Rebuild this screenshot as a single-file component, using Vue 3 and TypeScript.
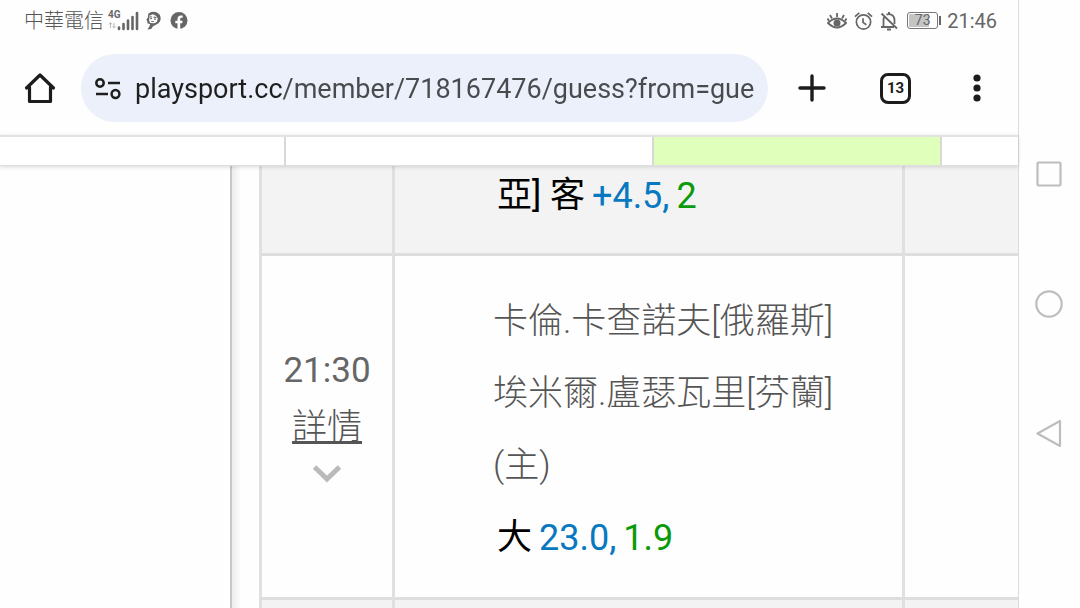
<script setup lang="ts">
import { ref } from 'vue'

interface Pick {
  side: string
  line: string
  odds: string
}

interface GuessRow {
  id: number
  time: string
  teams: string[]
  pick: Pick
}

const carrier = '中華電信'
const clock = '21:46'
const battery = 73
const tabCount = 13
const address = ref('playsport.cc/member/718167476/guess?from=gue')

const rows: GuessRow[] = [
  { id: 1, time: '', teams: [], pick: { side: '亞] 客', line: '+4.5', odds: '2' } },
  {
    id: 2,
    time: '21:30',
    teams: ['卡倫.卡查諾夫[俄羅斯]', '埃米爾.盧瑟瓦里[芬蘭]', '(主)'],
    pick: { side: '大', line: '23.0', odds: '1.9' },
  },
]
</script>

<template>
  <div class="device">
    <div class="screen">
      <header class="status">
        <div class="status-group">
          <span class="carrier">{{ carrier }}</span>
          <svg class="signal" viewBox="0 0 31 22" aria-label="4G">
            <text x="0" y="8" class="net">4G</text>
            <path d="M2.500 18v-5M1 14.500l1.500-2 1.500 2M6 13v5M4.600 16l1.400 2 1.500-2" fill="none" stroke="#bbb" stroke-width="1" />
            <path d="M11 19v-1.500M15.500 19v-5M20 19v-8.500M24.500 19V7M29 19V3" stroke="#666" stroke-width="2.600" fill="none" stroke-linecap="round" />
          </svg>
          <svg class="badge" viewBox="0 0 18 20" aria-hidden="true">
            <path d="M3 3C6 0 12 0 15 4c2 4 1 8-3 10l-4 2-2 3-4 .5 2-3 1-2.500-3-1L2 11 1 9l1.500-2z" fill="#666" />
            <path d="M4 5l4-1.500 3 1.500 2 3-1 3.500-3 1.500-4-.500-1-2z" fill="#fff" />
            <path d="M4 6.500l3-.500M8.500 6.500l3 .500M5 8h2M9 8.500h2M6 11h3" stroke="#777" stroke-width="1.200" />
          </svg>
          <svg class="badge" viewBox="0 0 18 18" aria-hidden="true">
            <circle cx="9" cy="9" r="8.500" fill="#666" />
            <path d="M7.500 17.400v-5.700H5.300V9.200h2.200V7.400c0-2.300 1.300-3.500 3.300-3.500l1.900.200v2.100h-1.100c-1.100 0-1.400.600-1.400 1.300v1.700h2.400l-.400 2.500h-2v5.700z" fill="#fff" />
          </svg>
        </div>
        <div class="status-group">
          <svg class="eye" viewBox="0 0 20 18" aria-hidden="true">
            <path d="M1 11q9-9 18 0-9 9-18 0z" fill="none" stroke="#666" stroke-width="1.800" />
            <circle cx="10" cy="11" r="3.500" fill="#666" />
            <path d="M10 5V1M5 6.500L3 3M15 6.500l2-3.500M2 9L.500 6.500M18 9l1.500-2.500" stroke="#666" stroke-width="1.800" />
          </svg>
          <svg class="alarm" viewBox="0 0 20 20" aria-hidden="true">
            <circle cx="10" cy="11" r="7.500" fill="none" stroke="#666" stroke-width="1.800" />
            <path d="M9.500 7v4.500l3.500 2.500M1 5.500L5.500 1.500M19 5.500l-4.500-4" fill="none" stroke="#666" stroke-width="1.800" />
          </svg>
          <svg class="bell" viewBox="0 0 18 20" aria-hidden="true">
            <path d="M3.500 15.500V9q0-2 1-3.500M6.500 3.800Q9 2.500 11.500 3.800 14.500 5.500 14.500 9v4M1 16h13M1.500 2.500l15.500 15" fill="none" stroke="#666" stroke-width="1.800" />
            <path d="M7 18.500h4M9 1v2" stroke="#666" stroke-width="2" />
          </svg>
          <span class="battery"><span class="level">{{ battery }}</span></span>
          <span class="clock">{{ clock }}</span>
        </div>
      </header>

      <form class="toolbar" @submit.prevent>
        <button type="button" class="icon-btn" aria-label="首頁">
          <svg width="32" height="32" viewBox="0 0 32 32">
            <path d="M2.500 16L16 3l13.500 13M5.500 15v14.500h21V15" fill="none" stroke="#1c1c1c" stroke-width="3.200" stroke-linejoin="round" stroke-linecap="round" />
          </svg>
        </button>
        <div class="omnibox">
          <button type="button" class="icon-btn" aria-label="網站資訊">
            <svg width="26" height="22" viewBox="0 0 26 22">
              <g fill="none" stroke="#1f1f1f" stroke-width="2.500">
                <circle cx="5" cy="5" r="3.700" /><path d="M13 5h12M1 16h12" /><circle cx="20.500" cy="16" r="3.900" />
              </g>
            </svg>
          </button>
          <input v-model="address" class="address" type="text" aria-label="網址" />
        </div>
        <div class="actions">
          <button type="button" class="icon-btn" aria-label="新分頁">
            <svg width="28" height="28" viewBox="0 0 28 28"><path d="M14 2v24M2 14h24" stroke="#1c1c1c" stroke-width="3.400" stroke-linecap="round" /></svg>
          </button>
          <button type="button" class="icon-btn tabs" aria-label="分頁">{{ tabCount }}</button>
          <button type="button" class="icon-btn menu" aria-label="選單">
            <svg width="8" height="28" viewBox="0 0 8 28"><g fill="#1c1c1c"><circle cx="4" cy="4" r="3.600" /><circle cx="4" cy="14" r="3.600" /><circle cx="4" cy="24" r="3.600" /></g></svg>
          </button>
        </div>
      </form>

      <div class="strip">
        <div></div>
        <div></div>
        <div class="active"></div>
        <div></div>
      </div>

      <main class="page">
        <aside class="gutter"></aside>
        <div class="board">
          <table class="guesses">
            <colgroup>
              <col class="col-time" />
              <col class="col-match" />
              <col />
            </colgroup>
            <tbody>
              <tr v-for="row in rows" :key="row.id" :class="{ partial: !row.time }">
                <td class="time">
                  <template v-if="row.time">
                    <div>{{ row.time }}</div>
                    <a href="#detail">詳情</a>
                    <svg width="30" height="20" viewBox="0 0 30 20" aria-hidden="true">
                      <path d="M2.500 3L15 15 27.500 3" fill="none" stroke="#bababa" stroke-width="5" />
                    </svg>
                  </template>
                </td>
                <td class="match">
                  <div v-for="team in row.teams" :key="team" class="team">{{ team }}</div>
                  <div class="pick">
                    <span>{{ row.pick.side }}</span>
                    <span class="line">{{ row.pick.line }},</span>
                    <span class="odds">{{ row.pick.odds }}</span>
                  </div>
                </td>
                <td></td>
              </tr>
              <tr class="next"><td></td><td></td><td></td></tr>
            </tbody>
          </table>
        </div>
      </main>
    </div>

    <nav class="sysnav" aria-label="系統">
      <button type="button" class="icon-btn" aria-label="最近">
        <svg width="28" height="28" viewBox="0 0 28 28"><rect x="2.500" y="2.500" width="23" height="23" rx="1" fill="none" stroke="#bdbdbd" stroke-width="2.200" /></svg>
      </button>
      <button type="button" class="icon-btn" aria-label="主畫面">
        <svg width="28" height="28" viewBox="0 0 28 28"><circle cx="14" cy="14" r="12.700" fill="none" stroke="#bdbdbd" stroke-width="2.200" /></svg>
      </button>
      <button type="button" class="icon-btn" aria-label="返回">
        <svg width="28" height="28" viewBox="0 0 28 28"><path d="M2.500 13.500L25 1v25z" fill="none" stroke="#bdbdbd" stroke-width="2.200" stroke-linejoin="round" /></svg>
      </button>
    </nav>
  </div>
</template>

<style>
body {
  margin: 0;
  background: #fefefe;
}
</style>

<style scoped>
.device {
  display: flex;
  height: 100vh;
  overflow: hidden;
  font-family: Roboto, "Noto Sans CJK TC", sans-serif;
  color: #666;
}
.screen {
  flex: 1;
  min-width: 0;
  display: flex;
  flex-direction: column;
  border-right: 1px solid #dcdcda;
}
.status {
  display: flex;
  justify-content: space-between;
  align-items: center;
  height: 41px;
  padding: 0 21px 0 24px;
  font-size: 20px;
}
.status-group {
  display: flex;
  align-items: center;
  gap: 7px;
}
.carrier {
  line-height: 24px;
  font-weight: 300;
  color: #555;
}
.signal {
  width: 31px;
  height: 22px;
  margin-left: -3px;
  margin-right: -1px;
}
.net {
  font: 700 10px Roboto, sans-serif;
  fill: #666;
}
.badge {
  width: 18px;
  height: 19px;
}
.eye {
  width: 20px;
  height: 18px;
}
.alarm {
  width: 19px;
  height: 20px;
}
.bell {
  width: 18px;
  height: 20px;
}
.battery {
  position: relative;
  display: flex;
  box-sizing: border-box;
  width: 31px;
  height: 17px;
  margin: 0 4px 0 2px;
  padding: 1px;
  border: 1px solid #777;
  border-radius: 3px;
  background: linear-gradient(90deg, #c4c4c4 73%, #fefefe 73%) content-box;
  font-size: 14px;
  line-height: 13px;
}
.battery::after {
  content: "";
  position: absolute;
  right: -4px;
  top: 3px;
  width: 2px;
  height: 9px;
  background: #666;
}
.level {
  flex: 1;
  text-align: center;
}
.clock {
  margin-left: -2px;
}
.toolbar {
  display: flex;
  align-items: center;
  height: 94px;
  padding-left: 24px;
}
.icon-btn {
  display: flex;
  align-items: center;
  justify-content: center;
  padding: 0;
  border: 0;
  background: none;
  font-family: inherit;
  cursor: pointer;
}
.omnibox {
  flex: 1;
  display: flex;
  align-items: center;
  gap: 14px;
  height: 68px;
  min-width: 0;
  margin-left: 25px;
  padding: 2px 14px 0;
  box-sizing: border-box;
  border-radius: 34px;
  background: #ebf0fa;
}
.address {
  flex: 1;
  min-width: 0;
  padding: 0;
  border: 0;
  outline: 0;
  height: 40px;
  font: 400 27px Roboto, sans-serif;
  color: transparent;
  caret-color: #1f1f1f;
  background: linear-gradient(90deg, #1f1f1f 148px, #484a4e 148px);
  background-clip: text;
}
.actions {
  display: flex;
  align-items: center;
  gap: 54px;
  margin: 0 29px 0 30px;
}
.tabs {
  width: 31px;
  height: 31px;
  border: 3px solid #1c1c1c;
  border-radius: 8px;
  color: #1c1c1c;
  font-size: 15px;
  font-weight: 700;
}
.menu {
  width: 24px;
}
.strip {
  position: relative;
  display: grid;
  grid-template-columns: 284fr 368fr 288fr 78fr;
  height: 28px;
  border-top: 2px solid #e2e2e2;
  border-bottom: 1px solid #dedede;
  background: #fff;
  box-shadow: 0 1px 4px rgba(0, 0, 0, 0.15);
}
.strip div + div {
  border-left: 2px solid #d8d8d8;
}
.strip .active {
  background: #e0ffbb;
}
.page {
  flex: 1;
  min-height: 0;
  display: flex;
  overflow: hidden;
}
.gutter {
  width: 231px;
  border-right: 2px solid #c8c8c8;
}
.board {
  flex: 1;
  padding-left: 27px;
  background: linear-gradient(90deg, #ececec, #fefefe 9px);
}
.gutter {
  box-sizing: border-box;
  width: 232px;
}
.guesses {
  width: 100%;
  table-layout: fixed;
  border-collapse: separate;
  border-spacing: 0;
  font-size: 35px;
  background: #fefefe;
}
.col-time {
  width: 133px;
}
.col-match {
  width: 510px;
}
td {
  padding: 0;
  border-left: 3px solid #e0e0e0;
  border-bottom: 3px solid #dedede;
}
.partial td {
  background: #f3f3f3;
}
.time {
  text-align: center;
  line-height: 57px;
}
.guesses .time {
  padding-bottom: 28px;
}
.time a {
  display: block;
  color: #555;
  font-weight: 300;
  text-decoration: underline;
  text-decoration-thickness: 3px;
}
.time svg {
  display: block;
  margin: 8px auto 0;
}
.match {
  padding: 30px 0 23px 98px;
  line-height: 72px;
  white-space: nowrap;
}
.team {
  font-weight: 300;
  color: #555;
}
.partial .match {
  padding: 0 0 27px 98px;
  line-height: 60px;
}
.pick {
  display: flex;
  gap: 7px;
  padding-left: 4px;
  color: #000;
}
.line,
.odds {
  font-size: 36px;
}
.line {
  color: #0878c0;
}
.odds {
  color: #0a9a0a;
}
.next td {
  height: 72px;
  background: #f3f3f3;
}
.sysnav {
  display: flex;
  flex-direction: column;
  align-items: center;
  justify-content: center;
  gap: 102px;
  box-sizing: border-box;
  width: 61px;
  padding-right: 2px;
}
</style>
